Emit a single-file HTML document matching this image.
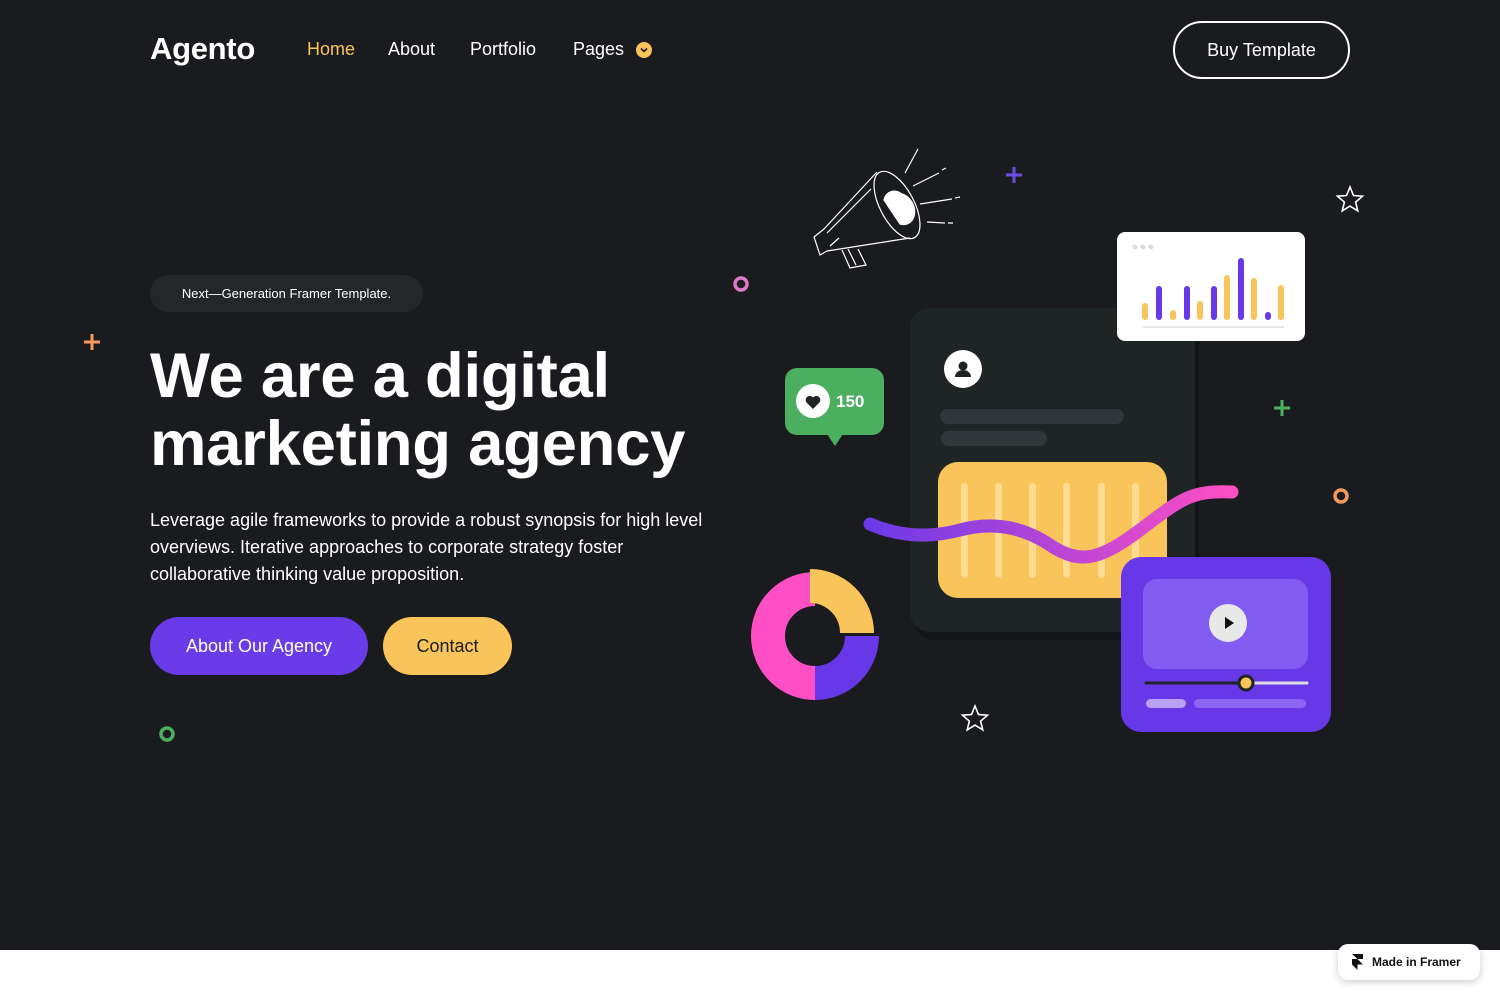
<!DOCTYPE html>
<html><head><meta charset="utf-8"><style>
*{margin:0;padding:0;box-sizing:border-box}
body{width:1500px;height:1000px;background:#fff;font-family:"Liberation Sans",sans-serif;overflow:hidden;position:relative}
.hero{position:absolute;left:0;top:0;width:1500px;height:950px;background:#1a1b1f}
.abs{position:absolute}
.nav a{position:absolute;top:39px;font-size:18px;color:#fff;text-decoration:none}
h1{position:absolute;left:150px;top:342px;font-size:63.5px;line-height:68px;color:#fff;font-weight:700;letter-spacing:-0.3px}
p.lead{position:absolute;left:150px;top:507px;width:570px;font-size:18px;line-height:27px;color:#fff}
.btn{position:absolute;top:617px;height:58px;border-radius:29px;font-size:18px;display:flex;align-items:center;justify-content:center}
</style></head><body>
<div class="hero">
<div class="abs" style="left:150px;top:31px;font-size:31px;font-weight:700;color:#fff;letter-spacing:-0.3px">Agento</div>
<div class="nav">
<a style="left:307px;color:#f9c55a">Home</a>
<a style="left:388px">About</a>
<a style="left:470px">Portfolio</a>
<a style="left:573px">Pages</a>
</div>
<svg class="abs" style="left:636px;top:42px" width="16" height="16"><circle cx="8" cy="8" r="8" fill="#f9c55a"/><path d="M5 6.5l3 3 3-3" stroke="#1a1b1f" stroke-width="1.6" fill="none"/></svg>
<div class="abs" style="left:1173px;top:21px;width:177px;height:58px;border:2px solid #fff;border-radius:29px;color:#fff;font-size:18px;display:flex;align-items:center;justify-content:center">Buy Template</div>

<div class="abs" style="left:150px;top:275px;width:273px;height:37px;border-radius:19px;background:#23272a;color:#fff;font-size:13px;display:flex;align-items:center;justify-content:center">Next—Generation Framer Template.</div>
<h1>We are a digital<br>marketing agency</h1>
<p class="lead">Leverage agile frameworks to provide a robust synopsis for high level overviews. Iterative approaches to corporate strategy foster collaborative thinking value proposition.</p>
<div class="btn" style="left:150px;width:218px;background:#6a3be8;color:#fff">About Our Agency</div>
<div class="btn" style="left:383px;width:129px;background:#f9c55a;color:#1a1b1f">Contact</div>

<svg class="abs" style="left:0;top:0" width="1500" height="950">
<defs><linearGradient id="w" x1="0" x2="1"><stop offset="0" stop-color="#6b3ae8"/><stop offset="1" stop-color="#ff4fc4"/></linearGradient></defs>
<path d="M84 342h16M92 334v16" stroke="#f59a5e" stroke-width="3"/>
<path d="M1006 175h16M1014 167v16" stroke="#6b4de6" stroke-width="3"/>
<path d="M1274 408h16M1282 400v16" stroke="#4caf5f" stroke-width="3"/>
<circle cx="741" cy="284" r="6" stroke="#e077c8" stroke-width="3.5" fill="none"/>
<circle cx="1341" cy="496" r="6" stroke="#f59a5e" stroke-width="3.5" fill="none"/>
<circle cx="167" cy="734" r="6" stroke="#4caf5f" stroke-width="3.5" fill="none"/>
<path d="M1350 187l3.5 8.5 9 .7-6.9 5.9 2.2 8.8-7.8-4.8-7.8 4.8 2.2-8.8-6.9-5.9 9-.7z" stroke="#fff" stroke-width="1.6" fill="none"/>
<path d="M975 706l3.5 8.5 9 .7-6.9 5.9 2.2 8.8-7.8-4.8-7.8 4.8 2.2-8.8-6.9-5.9 9-.7z" stroke="#fff" stroke-width="1.6" fill="none"/>
<g stroke="#fff" stroke-width="1.2" fill="none">
<ellipse cx="897" cy="205" rx="17" ry="37" transform="rotate(-28 897 205)"/>
<path d="M884 200a12 15 -28 0 1 18 -6a12 15 -28 0 1 -2 30z" fill="#fff"/>
<path d="M877 172L824 229M910 238L827 251M824 229l-10 8 6 18 7-4M830 246l9-8M827 233l44-44"/>
<path d="M842 250l8 18 16-3-8-16M848 249l8 16"/>
<path d="M905 173l13-24M913 186l26-13M942 170l4-2M920 204l32-5M955 198l5-1M927 222l18 1M948 223l5 0"/>
</g>
<rect x="914" y="318" width="285" height="322" rx="20" fill="#121416"/>
<rect x="910" y="308" width="285" height="324" rx="20" fill="#1f2425"/>
<circle cx="963" cy="369" r="19" fill="#fff"/>
<circle cx="963" cy="366" r="4.5" fill="#1f2425"/><path d="M955 377a8 7 0 0 1 16 0z" fill="#1f2425"/>
<rect x="940" y="409" width="184" height="15" rx="7.5" fill="#30363a"/>
<rect x="941" y="431" width="106" height="15" rx="7.5" fill="#30363a"/>
<rect x="938" y="462" width="229" height="136" rx="20" fill="#f9c55a"/>
<g fill="#fddb90"><rect x="961" y="483" width="7" height="95" rx="3.5"/><rect x="995" y="483" width="7" height="95" rx="3.5"/><rect x="1029" y="483" width="7" height="95" rx="3.5"/><rect x="1063" y="483" width="7" height="95" rx="3.5"/><rect x="1098" y="483" width="7" height="95" rx="3.5"/><rect x="1132" y="483" width="7" height="95" rx="3.5"/></g>
<path d="M870 524C900 537 930 538 960 530S1020 525 1050 545S1100 560 1140 530S1190 490 1232 492" stroke="url(#w)" stroke-width="13" fill="none" stroke-linecap="round"/>
<rect x="1117" y="232" width="188" height="109" rx="8" fill="#fff"/>
<g fill="#ddd"><circle cx="1135" cy="247" r="2.5"/><circle cx="1143" cy="247" r="2.5"/><circle cx="1151" cy="247" r="2.5"/></g>
<line x1="1143" y1="327" x2="1284" y2="327" stroke="#e6e6e6" stroke-width="2"/>
<g stroke-width="6" stroke-linecap="round">
<line x1="1145" y1="306" x2="1145" y2="317" stroke="#f9c55a"/>
<line x1="1159" y1="289" x2="1159" y2="317" stroke="#6638e8"/>
<line x1="1173" y1="313" x2="1173" y2="317" stroke="#f9c55a"/>
<line x1="1187" y1="289" x2="1187" y2="317" stroke="#6638e8"/>
<line x1="1200" y1="304" x2="1200" y2="317" stroke="#f9c55a"/>
<line x1="1214" y1="289" x2="1214" y2="317" stroke="#6638e8"/>
<line x1="1227" y1="278" x2="1227" y2="317" stroke="#f9c55a"/>
<line x1="1241" y1="261" x2="1241" y2="317" stroke="#6638e8"/>
<line x1="1254" y1="281" x2="1254" y2="317" stroke="#f9c55a"/>
<line x1="1268" y1="315" x2="1268" y2="317" stroke="#6638e8"/>
<line x1="1281" y1="288" x2="1281" y2="317" stroke="#f9c55a"/>
</g>
<rect x="785" y="368" width="99" height="67" rx="12" fill="#4caf5f"/>
<path d="M827 434l8 12 8-12z" fill="#4caf5f"/>
<circle cx="813" cy="401" r="17" fill="#fff"/>
<path d="M813 409l-6.5-6.5a3.8 3.8 0 0 1 6.5-5 3.8 3.8 0 0 1 6.5 5z" fill="#1f2425"/>
<text x="836" y="407" font-family="Liberation Sans" font-weight="700" font-size="17" fill="#fff">150</text>
<g fill="none" stroke-width="34">
<path d="M815 589A47 47 0 0 0 815 683" stroke="#ff4fc4"/>
<path d="M815 683A47 47 0 0 0 862 636" stroke="#6638e8"/>
<path d="M810 586A47 47 0 0 1 857 633" stroke="#f9c55a"/>
</g>
<rect x="1121" y="557" width="210" height="175" rx="20" fill="#6638e8"/>
<rect x="1143" y="579" width="165" height="90" rx="14" fill="#825cf0"/>
<circle cx="1228" cy="623" r="19" fill="#e8e8e8"/>
<path d="M1225 617v12l9-6z" fill="#111"/>
<line x1="1146" y1="683" x2="1246" y2="683" stroke="#1f2425" stroke-width="3" stroke-linecap="round"/>
<line x1="1246" y1="683" x2="1307" y2="683" stroke="#ddd" stroke-width="3" stroke-linecap="round"/>
<circle cx="1246" cy="683" r="7" fill="#f9c55a" stroke="#1f2425" stroke-width="3"/>
<rect x="1146" y="699" width="40" height="9" rx="4.5" fill="#b9a2f8"/>
<rect x="1194" y="699" width="112" height="9" rx="4.5" fill="#8a66f2"/>
</svg>
</div>
<div class="abs" style="left:1338px;top:944px;width:142px;height:36px;background:#fff;border-radius:10px;box-shadow:0 2px 8px rgba(0,0,0,.2);display:flex;align-items:center;font-size:12px;font-weight:700;color:#111">
<svg style="margin-left:14px;margin-right:8px" width="12" height="16"><path d="M0 0h11v5H5.5zM0 5h5.5L11 10.5H5.5V16L0 10.5z" fill="#111"/></svg>Made in Framer</div>
</body></html>
